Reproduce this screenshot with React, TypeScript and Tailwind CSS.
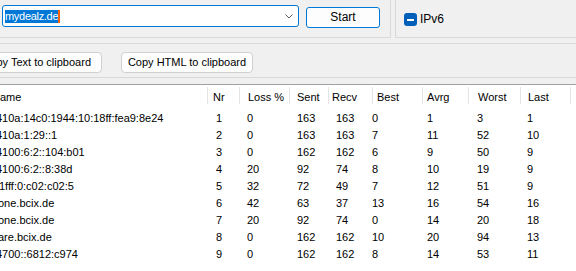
import React from "react";

const rows: { name: string; off: string; v: string[] }[] = [
  { name: "410a:14c0:1944:10:18ff:fea9:8e24", off: "-ml-[4px]", v: ["1", "0", "163", "163", "0", "1", "3", "1"] },
  { name: "410a:1:29::1", off: "-ml-[4px]", v: ["2", "0", "163", "163", "7", "11", "52", "10"] },
  { name: "4100:6:2::104:b01", off: "-ml-[4px]", v: ["3", "0", "162", "162", "6", "9", "50", "9"] },
  { name: "4100:6:2::8:38d", off: "-ml-[4px]", v: ["4", "20", "92", "74", "8", "10", "19", "9"] },
  { name: "1fff:0:c02:c02:5", off: "-ml-[1px]", v: ["5", "32", "72", "49", "7", "12", "51", "9"] },
  { name: "one.bcix.de", off: "-ml-[2px]", v: ["6", "42", "63", "37", "13", "16", "54", "16"] },
  { name: "one.bcix.de", off: "-ml-[2px]", v: ["7", "20", "92", "74", "0", "14", "20", "18"] },
  { name: "are.bcix.de", off: "-ml-[2px]", v: ["8", "0", "162", "162", "10", "20", "94", "13"] },
  { name: "4700::6812:c974", off: "-ml-[4px]", v: ["9", "0", "162", "162", "8", "14", "53", "11"] },
];

const cellW = ["w-[31px]", "w-[50px]", "w-[39px]", "w-[36px]", "w-[55px]", "w-[50px]", "w-[50px]", "w-[49px]"];

const headers: { label: string; w: string; pl: string }[] = [
  { label: "Nr", w: "w-[32px]", pl: "pl-[5px]" },
  { label: "Loss %", w: "w-[50px]", pl: "pl-[8px]" },
  { label: "Sent", w: "w-[39px]", pl: "pl-[7px]" },
  { label: "Recv", w: "w-[44px]", pl: "pl-[3px]" },
  { label: "Best", w: "w-[50px]", pl: "pl-[4px]" },
  { label: "Avrg", w: "w-[46px]", pl: "pl-[4px]" },
  { label: "Worst", w: "w-[52px]", pl: "pl-[9px]" },
  { label: "Last", w: "w-[50px]", pl: "pl-[7px]" },
];

function Sep() {
  return <span className="mt-[2px] h-[17px] w-px shrink-0 bg-[#e5e5e5]" />;
}

export default function App() {
  return (
    <div className="w-[576px] h-[271px] overflow-hidden bg-[#f0f0f0] flex flex-col font-['Liberation_Sans',Arial,sans-serif] text-black text-[11px]">
      {/* top groups */}
      <div className="flex h-[38px] shrink-0">
        <div className="w-[391px] shrink-0 border-r border-b border-[#d9d9d9] flex items-start">
          <div className="ml-[2px] mt-[5px] w-[297px] h-[22px] border border-[#0078d7] rounded-[3px] bg-white flex items-center">
            <span className="ml-[2px] bg-[#0078d7] text-white leading-[13px] tracking-[-0.3px]">mydealz.de</span>
            <span className="w-[2px] h-[13px] bg-[#f7630c]" />
            <svg className="ml-auto mr-[5px]" width="8" height="5" viewBox="0 0 8 5">
              <path d="M0.5 0.5 L4 4 L7.5 0.5" fill="none" stroke="#606060" strokeWidth="1" />
            </svg>
          </div>
          <button className="ml-[7px] mt-[7px] w-[74px] h-[21px] border border-[#0078d7] rounded-[3px] bg-[#fdfdfd] leading-[19px] text-[12px]">
            Start
          </button>
        </div>
        <div className="ml-[4px] flex-1 border-l border-b border-[#d9d9d9] flex items-start">
          <div className="ml-[8px] mt-[13px] flex items-center">
            <span className="w-[13px] h-[13px] rounded-[3px] bg-[#005fb8] flex items-center justify-center">
              <span className="w-[7px] h-[2px] bg-white" />
            </span>
            <span className="ml-[3px] text-[12px] leading-[13px]">IPv6</span>
          </div>
        </div>
      </div>

      {/* clipboard group */}
      <div className="mt-[5px] h-[35px] shrink-0 border-t border-b border-[#d9d9d9] flex items-start">
        <button className="-ml-[30px] mt-[8px] w-[132px] h-[21px] border border-[#d0d0d0] rounded-[4px] bg-[#fdfdfd] leading-[19px] text-[11px] text-right pr-[10px]">
          Copy Text to clipboard
        </button>
        <button className="ml-[19px] mt-[8px] w-[132px] h-[21px] border border-[#d0d0d0] rounded-[4px] bg-[#fdfdfd] leading-[19px] text-[11px]">
          Copy HTML to clipboard
        </button>
      </div>

      {/* list */}
      <div className="mt-[6px] flex-1 border-t border-[#a0a0a0] bg-white overflow-hidden">
        <div className="flex h-[25px] items-start">
          <div className="w-[208px] shrink-0 flex justify-between items-start overflow-hidden">
            <span className="-ml-[8px] leading-[25px]">Name</span>
            <Sep />
          </div>
          {headers.map((h) => (
            <div key={h.label} className={`${h.w} shrink-0 flex justify-between items-start`}>
              <span className={`${h.pl} leading-[25px] whitespace-nowrap`}>{h.label}</span>
              <Sep />
            </div>
          ))}
        </div>
        {rows.map((r, i) => (
          <div key={i} className="flex h-[17px] items-center leading-[17px]">
            <div className="w-[216px] shrink-0 overflow-hidden whitespace-nowrap">
              <span className={`block ${r.off}`}>{r.name}</span>
            </div>
            {r.v.map((c, j) => (
              <div key={j} className={`${cellW[j]} shrink-0`}>
                {c}
              </div>
            ))}
          </div>
        ))}
      </div>
    </div>
  );
}
